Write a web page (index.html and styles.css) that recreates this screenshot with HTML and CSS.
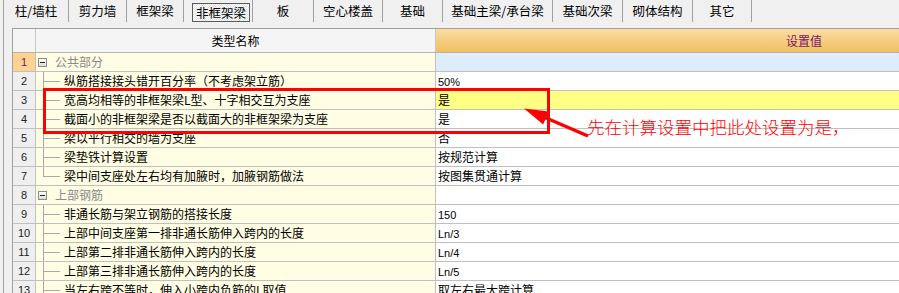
FILE: index.html
```html
<!DOCTYPE html>
<html lang="zh-CN">
<head>
<meta charset="utf-8">
<title>非框架梁设置</title>
<link rel="stylesheet" href="styles.css">
</head>
<body>
<div class="window">
  <div class="tabs">
    <div class="tab t1">柱/墙柱</div>
    <div class="tab t2">剪力墙</div>
    <div class="tab t3">框架梁</div>
    <div class="tab t4 active"><span class="tab-box">非框架梁</span></div>
    <div class="tab t5">板</div>
    <div class="tab t6">空心楼盖</div>
    <div class="tab t7">基础</div>
    <div class="tab t8">基础主梁/承台梁</div>
    <div class="tab t9">基础次梁</div>
    <div class="tab t10">砌体结构</div>
    <div class="tab t11">其它</div>
  </div>

  <div class="grid">
    <div class="row head">
      <div class="num"></div>
      <div class="name">类型名称</div>
      <div class="val">设置值</div>
    </div>

    <div class="row group current">
      <div class="num">1</div>
      <div class="name"><span class="minus"></span><span class="gtext">公共部分</span></div>
      <div class="val"></div>
    </div>
    <div class="row">
      <div class="num">2</div>
      <div class="name"><span class="branch"></span><span class="label">纵筋搭接接头错开百分率（不考虑架立筋）</span></div>
      <div class="val"><span class="lat">50%</span></div>
    </div>
    <div class="row">
      <div class="num">3</div>
      <div class="name"><span class="branch"></span><span class="label">宽高均相等的非框架梁L型、十字相交互为支座</span></div>
      <div class="val hl">是</div>
    </div>
    <div class="row">
      <div class="num">4</div>
      <div class="name"><span class="branch"></span><span class="label">截面小的非框架梁是否以截面大的非框架梁为支座</span></div>
      <div class="val">是</div>
    </div>
    <div class="row">
      <div class="num">5</div>
      <div class="name"><span class="branch"></span><span class="label">梁以平行相交的墙为支座</span></div>
      <div class="val">否</div>
    </div>
    <div class="row">
      <div class="num">6</div>
      <div class="name"><span class="branch"></span><span class="label">梁垫铁计算设置</span></div>
      <div class="val">按规范计算</div>
    </div>
    <div class="row">
      <div class="num">7</div>
      <div class="name"><span class="branch last"></span><span class="label">梁中间支座处左右均有加腋时，加腋钢筋做法</span></div>
      <div class="val">按图集贯通计算</div>
    </div>
    <div class="row group">
      <div class="num">8</div>
      <div class="name"><span class="minus"></span><span class="gtext">上部钢筋</span></div>
      <div class="val"></div>
    </div>
    <div class="row">
      <div class="num">9</div>
      <div class="name"><span class="branch"></span><span class="label">非通长筋与架立钢筋的搭接长度</span></div>
      <div class="val"><span class="lat">150</span></div>
    </div>
    <div class="row">
      <div class="num">10</div>
      <div class="name"><span class="branch"></span><span class="label">上部中间支座第一排非通长筋伸入跨内的长度</span></div>
      <div class="val"><span class="lat">Ln/3</span></div>
    </div>
    <div class="row">
      <div class="num">11</div>
      <div class="name"><span class="branch"></span><span class="label">上部第二排非通长筋伸入跨内的长度</span></div>
      <div class="val"><span class="lat">Ln/4</span></div>
    </div>
    <div class="row">
      <div class="num">12</div>
      <div class="name"><span class="branch"></span><span class="label">上部第三排非通长筋伸入跨内的长度</span></div>
      <div class="val"><span class="lat">Ln/5</span></div>
    </div>
    <div class="row">
      <div class="num">13</div>
      <div class="name"><span class="branch"></span><span class="label">当左右跨不等时，伸入小跨内负筋的L取值</span></div>
      <div class="val">取左右最大跨计算</div>
    </div>
  </div>
</div>

<div class="mark-box"></div>
<svg class="mark-arrow" width="899" height="293" viewBox="0 0 899 293" aria-hidden="true">
  <line x1="588" y1="136" x2="545" y2="117.5" stroke="#ff0000" stroke-width="3.5"/>
  <polygon points="524,108.5 543.2,124.4 548.8,111.6" fill="#ff0000"/>
</svg>
<div class="mark-text">先在计算设置中把此处设置为是，</div>
</body>
</html>
```

FILE: styles.css
```css
html, body {
  margin: 0;
  padding: 0;
}
body {
  width: 899px;
  height: 293px;
  overflow: hidden;
  position: relative;
  background: #f0f0f0;
  font-family: "Noto Sans CJK SC", "Noto Sans", sans-serif;
  font-size: 12px;
  color: #000;
}

.window {
  margin-left: 3px;
  border-left: 1px solid #a0a0a0;
  height: 293px;
}

/* ---------- tabs ---------- */
.tabs {
  display: flex;
  height: 28px;
}
.tab {
  flex: none;
  box-sizing: border-box;
  height: 22px;
  line-height: 22px;
  text-align: center;
  border-right: 1px solid #a0a0a0;
  white-space: nowrap;
  font-size: 12.5px;
}
.t1 { width: 65px; }
.t2 { width: 58px; }
.t3 { width: 57px; }
.t4 { width: 69px; }
.t5 { width: 61px; }
.t6 { width: 69px; }
.t7 { width: 60px; }
.t8 { width: 110px; }
.t9 { width: 70px; }
.t10 { width: 70px; }
.t11 { width: 59px; }

.tab.active {
  display: flex;
  align-items: flex-end;
  padding: 3px 2px 0 8px;
}
.tab-box {
  display: block;
  box-sizing: border-box;
  width: 58px;
  height: 19px;
  line-height: 17px;
  border: 1px solid #5c5c5c;
  background: repeating-conic-gradient(#ffffff 0 25%, #e4e4e4 0 50%) 0 0 / 2px 2px;
  text-align: center;
}

/* ---------- grid ---------- */
.grid {
  margin-left: 8px;
  border-left: 1px solid #a0a0a0;
  border-top: 1px solid #a0a0a0;
}
.row {
  display: flex;
  box-sizing: border-box;
  height: 19px;
  border-bottom: 1px solid #c0c0c0;
}
.num {
  flex: none;
  box-sizing: border-box;
  width: 23px;
  border-right: 1px solid #c0c0c0;
  background: #efefef;
  font-family: "Liberation Sans", "DejaVu Sans", sans-serif;
  font-size: 11px;
  color: #222;
  text-align: center;
  line-height: 18px;
}
.name {
  flex: none;
  box-sizing: border-box;
  width: 400px;
  border-right: 1px solid #c0c0c0;
  background: #fffde3;
  display: flex;
  align-items: stretch;
  white-space: nowrap;
  overflow: hidden;
}
.val {
  flex: 1;
  background: #ffffff;
  padding-left: 2px;
  line-height: 18px;
  white-space: nowrap;
}
.val.hl {
  background: #ffff84;
}

/* header */
.row.head {
  height: 24px;
  border-bottom-color: #b4b4b4;
}
.head .num,
.head .name {
  background: #f5f5f5;
  border-right-color: #c8c8c8;
}
.head .name {
  justify-content: center;
  align-items: center;
}
.head .val {
  background: linear-gradient(#fbdca2, #f0c060);
  color: #7a1470;
  line-height: 23px;
  padding-left: 350px;
}

/* current row */
.row.current .num {
  background: #fdd38f;
  color: #7a1060;
}
.row.current .val {
  background: #deedfc;
}

/* tree */
.minus {
  flex: none;
  box-sizing: border-box;
  width: 9px;
  height: 9px;
  margin: 5px 0 0 2px;
  border: 1px solid #8c8c8c;
  background:
    linear-gradient(#222, #222) no-repeat center / 5px 1px,
    linear-gradient(#ffffff, #dcdcdc);
}
.gtext {
  margin-left: 8px;
  color: #8a8a8a;
  line-height: 18px;
}
.branch {
  flex: none;
  width: 17px;
  margin-left: 7px;
  background:
    linear-gradient(#a8a8a8, #a8a8a8) no-repeat 0 0 / 1px 100%,
    linear-gradient(#a8a8a8, #a8a8a8) no-repeat 1px 9px / 16px 1px;
}
.branch.last {
  background:
    linear-gradient(#a8a8a8, #a8a8a8) no-repeat 0 0 / 1px 10px,
    linear-gradient(#a8a8a8, #a8a8a8) no-repeat 1px 9px / 16px 1px;
}
.label {
  margin-left: 4px;
  line-height: 18px;
}
.lat {
  font-family: "Liberation Sans", "DejaVu Sans", sans-serif;
  font-size: 11px;
}

/* ---------- annotation overlay ---------- */
.mark-box {
  position: absolute;
  left: 43px;
  top: 88px;
  width: 507px;
  height: 46px;
  box-sizing: border-box;
  border: 3px solid #ff0000;
}
.mark-arrow {
  position: absolute;
  left: 0;
  top: 0;
}
.mark-text {
  position: absolute;
  left: 587px;
  top: 118px;
  font-size: 17.5px;
  font-weight: 300;
  line-height: 18px;
  color: #ff0000;
  white-space: nowrap;
}
```
